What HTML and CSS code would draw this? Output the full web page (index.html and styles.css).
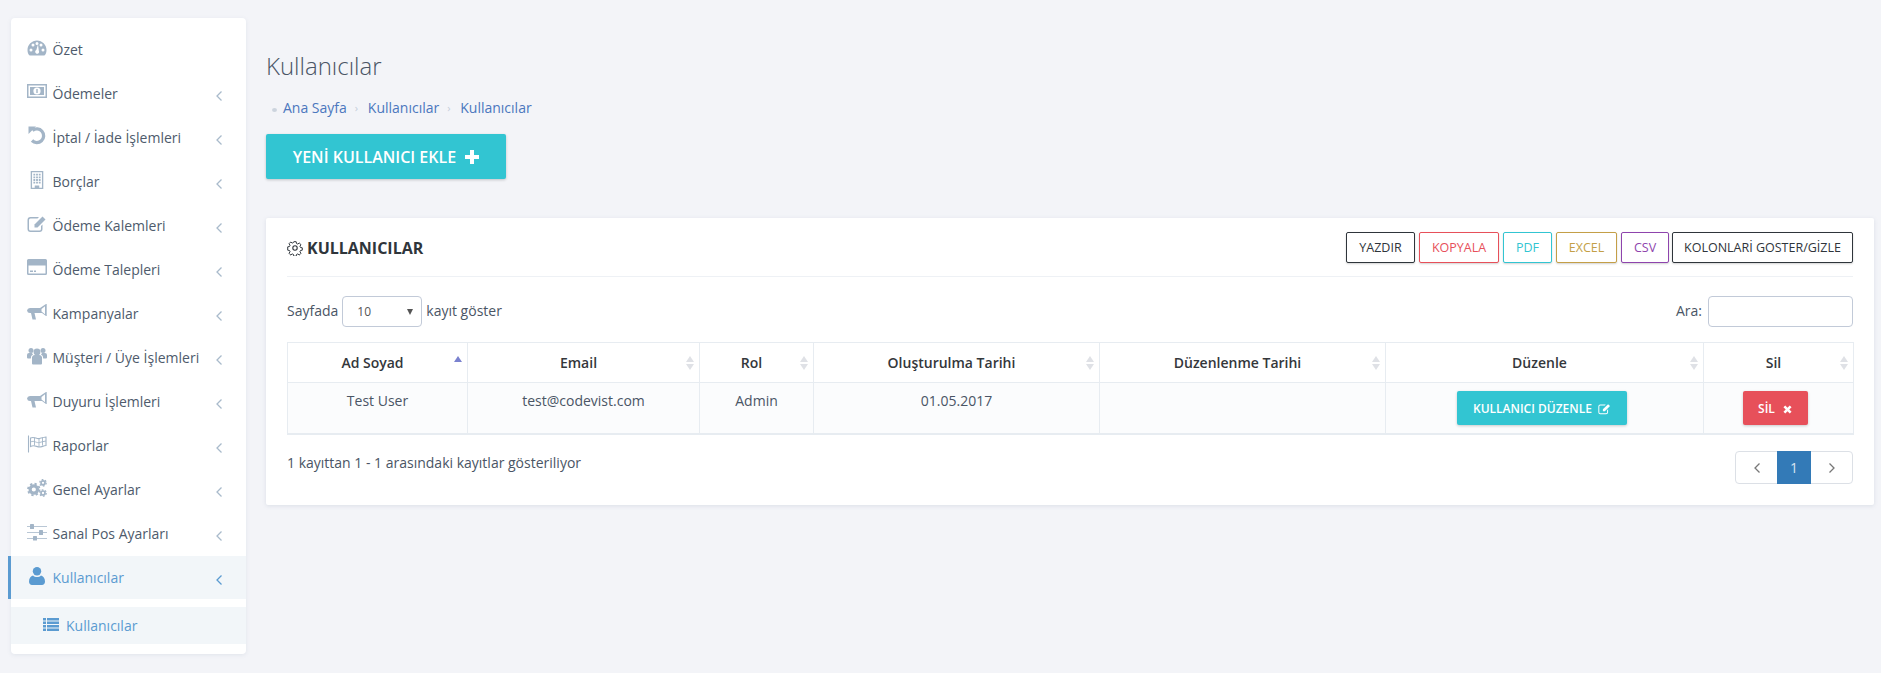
FILE: index.html
```html
<!DOCTYPE html>
<html lang="tr">
<head>
<meta charset="utf-8">
<title>Kullanıcılar</title>
<link rel="stylesheet" href="styles.css">
</head>
<body>
<svg class="defs" width="0" height="0">
  <symbol id="i-dash" viewBox="0 0 20 20"><path fill="currentColor" fill-rule="evenodd" d="M10 2.500C4.800 2.500 .5 6.800.5 12c0 1.900.5 3.600 1.500 5.100.2.300.5.400.8.400h14.400c.3 0 .6-.1.800-.4 1-1.500 1.500-3.200 1.500-5.100 0-5.200-4.300-9.500-9.500-9.500zM4 13.500a1.500 1.500 0 1 1 0-3 1.500 1.500 0 0 1 0 3zm2-5a1.500 1.500 0 1 1 0-3 1.500 1.500 0 0 1 0 3zm4-1.500a1.500 1.500 0 1 1 0-3 1.500 1.500 0 0 1 0 3zm1.200 8.500a2 2 0 0 1-3-1.700c0-.8.500-1.500 1.100-1.800L11 6.500l.8 6.200c.6.800.3 2.200-.6 2.800zM14 8.500a1.500 1.500 0 1 1 0-3 1.500 1.500 0 0 1 0 3zm2 5a1.500 1.500 0 1 1 0-3 1.500 1.500 0 0 1 0 3z"/></symbol>
  <symbol id="i-money" viewBox="0 0 20 14"><path fill="currentColor" fill-rule="evenodd" d="M0 0h20v14H0zM1.500 1.500v11h17v-11zM3 3h14v8H3z"/><circle cx="10" cy="7" r="3.600" fill="#fff"/><rect x="9.300" y="5" width="1.400" height="4" fill="currentColor"/></symbol>
  <symbol id="i-undo" viewBox="0 0 20 20"><path fill="none" stroke="currentColor" stroke-width="3.300" d="M5.500 5.500A6.800 6.800 0 1 1 5 15.500"/><path fill="currentColor" d="M1.500 1.500h7.500L1.500 9z"/></symbol>
  <symbol id="i-building" viewBox="0 0 16 20"><path fill="currentColor" fill-rule="evenodd" d="M1 0h14v20H1zM2.500 1.500v17h3V16h5v2.500h3v-17z"/><path fill="currentColor" d="M4 3h2v2H4zm3 0h2v2H7zm3 0h2v2h-2zM4 6h2v2H4zm3 0h2v2H7zm3 0h2v2h-2zM4 9h2v2H4zm3 0h2v2H7zm3 0h2v2h-2zM4 12h2v2H4zm3 0h2v2H7zm3 0h2v2h-2z"/></symbol>
  <symbol id="i-edit" viewBox="0 0 20 18"><path fill="currentColor" d="M3.500 2H12l-1.500 1.500h-7A1.500 1.500 0 0 0 2 5v9a1.500 1.500 0 0 0 1.500 1.500h9A1.500 1.500 0 0 0 14 14v-3l1.500-1.500V14a3 3 0 0 1-3 3h-9a3 3 0 0 1-3-3V5a3 3 0 0 1 3-3z"/><path fill="currentColor" d="M15.500 1.500l3 3-8 8H7.500v-3z"/></symbol>
  <symbol id="i-card" viewBox="0 0 20 16"><path fill="currentColor" fill-rule="evenodd" d="M1.500 0h17A1.500 1.500 0 0 1 20 1.500v13a1.500 1.500 0 0 1-1.500 1.500h-17A1.500 1.500 0 0 1 0 14.500v-13A1.500 1.500 0 0 1 1.500 0zM1.500 6.500v8h17v-8zM3 11.500h3V13H3zm4 0h2V13H7z"/></symbol>
  <symbol id="i-bull" viewBox="0 0 20 16"><path fill="currentColor" fill-rule="evenodd" d="M19 0h.700v12H19l-4-3H7.500L9 15.500H5.500L4 9H3a3 3 0 0 1-3-2.500A3 3 0 0 1 3 4h10zM18 2.200l-3.500 2.800v2.500l3.500 2.800z"/></symbol>
  <symbol id="i-users" viewBox="0 0 20 18"><g fill="currentColor"><circle cx="10" cy="5" r="3.400"/><circle cx="4" cy="3.500" r="2.500"/><circle cx="16" cy="3.500" r="2.500"/><path d="M5 10a3 3 0 0 1 3-2h4a3 3 0 0 1 3 2v6.500a1 1 0 0 1-1 1H6a1 1 0 0 1-1-1z"/><path d="M0 8a2 2 0 0 1 2-2h3a4 4 0 0 0 1 1.500A4 4 0 0 0 3.800 11.500H1a1 1 0 0 1-1-1zM20 8a2 2 0 0 0-2-2h-3a4 4 0 0 1-1 1.500 4 4 0 0 1 2.200 4H19a1 1 0 0 0 1-1z"/></g></symbol>
  <symbol id="i-flag" viewBox="0 0 20 17"><g fill="none" stroke="currentColor"><path stroke-width="1.100" d="M1.500 0v17"/><path stroke-width="1.100" d="M3.500 2.500c4-2 6 1.500 9 .5 2-.5 4-1.200 6.500-1.500v8.500c-3 .5-4.500 1.500-6.500 1.500-3 0-5-2.500-9-.5z"/><path stroke-width=".9" d="M7.500 2v8M12 3v8.500M15.500 2v8M3.500 6.500c4-2 6 1.500 9 .5 2-.5 4-1.200 6.500-1.500"/></g></symbol>
  <symbol id="i-cogs" viewBox="0 0 20 18"><g fill="none" stroke="currentColor"><circle cx="6.800" cy="10.500" r="3.700" stroke-width="3.200"/><circle cx="6.800" cy="10.500" r="5.800" stroke-width="1.800" stroke-dasharray="2.280 2.280"/><circle cx="16" cy="3.800" r="2" stroke-width="1.700"/><circle cx="16" cy="3.800" r="3.200" stroke-width="1.300" stroke-dasharray="1.675 1.675"/><circle cx="16" cy="14" r="2" stroke-width="1.700"/><circle cx="16" cy="14" r="3.200" stroke-width="1.300" stroke-dasharray="1.675 1.675"/></g></symbol>
  <symbol id="i-sliders" viewBox="0 0 20 16"><g fill="currentColor"><path d="M0 2.200h20v.9H0zm0 6h20v.9H0zm0 6h20v.9H0z"/><rect x="3" y="0" width="4" height="5" rx=".6"/><rect x="12" y="6" width="4" height="5" rx=".6"/><rect x="6" y="12" width="4" height="4.500" rx=".6"/></g></symbol>
  <symbol id="i-user" viewBox="0 0 16 18"><g fill="currentColor"><circle cx="8" cy="4.300" r="4.200"/><path d="M0 14.500C0 11 1.800 8.800 4 8.400c1 1 2.400 1.600 4 1.600s3-.6 4-1.600c2.200.4 4 2.600 4 6.100 0 2-1.300 3.500-3 3.500H3c-1.700 0-3-1.500-3-3.500z"/></g></symbol>
  <symbol id="i-list" viewBox="0 0 16 13"><path fill="currentColor" d="M0 0h3v2.400H0zm4 0h12v2.400H4zM0 3.500h3v2.400H0zm4 0h12v2.400H4zM0 7h3v2.400H0zm4 0h12v2.400H4zM0 10.500h3v2.400H0zm4 0h12v2.400H4z"/></symbol>
  <symbol id="i-left" viewBox="0 0 8 12"><path fill="none" stroke="currentColor" stroke-width="1.300" d="M6.500 1.500L2 6l4.500 4.500"/></symbol>
  <symbol id="i-right" viewBox="0 0 8 12"><path fill="none" stroke="currentColor" stroke-width="1.300" d="M1.500 1.500L6 6l-4.500 4.500"/></symbol>
  <symbol id="i-gear" viewBox="0 0 16 16"><g fill="none" stroke="currentColor" stroke-width="1.100" stroke-linejoin="round"><circle cx="8" cy="8" r="2.200"/><path d="M6.700 1h2.600l.4 2 1.300.6 1.800-1.100 1.800 1.800-1.100 1.800.6 1.300 2 .4v2.600l-2 .4-.6 1.300 1.100 1.800-1.800 1.800-1.800-1.100-1.300.6-.4 2H6.700l-.4-2-1.300-.6-1.800 1.100-1.800-1.800 1.100-1.800-.6-1.300-2-.4V6.700l2-.4.6-1.300-1.100-1.800 1.800-1.800 1.800 1.100 1.300-.6z" transform="translate(.8 .8) scale(.9)"/></g></symbol>
  <symbol id="i-plus" viewBox="0 0 14 14"><path fill="currentColor" d="M5 0h4v5h5v4H9v5H5V9H0V5h5z"/></symbol>
  <symbol id="i-times" viewBox="0 0 10 10"><path fill="currentColor" d="M2.500.5L5 3l2.500-2.500 2 2L7 5l2.500 2.500-2 2L5 7 2.500 9.500l-2-2L3 5 .5 2.500z"/></symbol>
</svg>

<div class="page">
  <aside class="sidebar">
    <ul class="menu">
      <li class="item"><svg class="ic ic-dash"><use href="#i-dash"/></svg><span class="label">Özet</span></li>
      <li class="item"><svg class="ic ic-money"><use href="#i-money"/></svg><span class="label">Ödemeler</span><svg class="arrow"><use href="#i-left"/></svg></li>
      <li class="item"><svg class="ic ic-undo"><use href="#i-undo"/></svg><span class="label">İptal / İade İşlemleri</span><svg class="arrow"><use href="#i-left"/></svg></li>
      <li class="item"><svg class="ic ic-building"><use href="#i-building"/></svg><span class="label">Borçlar</span><svg class="arrow"><use href="#i-left"/></svg></li>
      <li class="item"><svg class="ic ic-edit"><use href="#i-edit"/></svg><span class="label">Ödeme Kalemleri</span><svg class="arrow"><use href="#i-left"/></svg></li>
      <li class="item"><svg class="ic ic-card"><use href="#i-card"/></svg><span class="label">Ödeme Talepleri</span><svg class="arrow"><use href="#i-left"/></svg></li>
      <li class="item"><svg class="ic ic-bull"><use href="#i-bull"/></svg><span class="label">Kampanyalar</span><svg class="arrow"><use href="#i-left"/></svg></li>
      <li class="item"><svg class="ic ic-users"><use href="#i-users"/></svg><span class="label">Müşteri / Üye İşlemleri</span><svg class="arrow"><use href="#i-left"/></svg></li>
      <li class="item"><svg class="ic ic-bull"><use href="#i-bull"/></svg><span class="label">Duyuru İşlemleri</span><svg class="arrow"><use href="#i-left"/></svg></li>
      <li class="item"><svg class="ic ic-flag"><use href="#i-flag"/></svg><span class="label">Raporlar</span><svg class="arrow"><use href="#i-left"/></svg></li>
      <li class="item"><svg class="ic ic-cogs"><use href="#i-cogs"/></svg><span class="label">Genel Ayarlar</span><svg class="arrow"><use href="#i-left"/></svg></li>
      <li class="item"><svg class="ic ic-sliders"><use href="#i-sliders"/></svg><span class="label">Sanal Pos Ayarları</span><svg class="arrow"><use href="#i-left"/></svg></li>
      <li class="item active"><svg class="ic ic-user"><use href="#i-user"/></svg><span class="label">Kullanıcılar</span><svg class="arrow"><use href="#i-left"/></svg></li>
      <li class="subitem"><svg class="ic-list"><use href="#i-list"/></svg><span class="label">Kullanıcılar</span></li>
    </ul>
  </aside>

  <main class="content">
    <h1 class="title">Kullanıcılar</h1>
    <ul class="crumbs">
      <li><a href="#">Ana Sayfa</a></li>
      <li><a href="#">Kullanıcılar</a></li>
      <li><a href="#">Kullanıcılar</a></li>
    </ul>
    <button class="add-btn" type="button">YENİ KULLANICI EKLE <svg class="plus"><use href="#i-plus"/></svg></button>

    <section class="card">
      <header class="card-head">
        <h2 class="card-title"><svg class="gear"><use href="#i-gear"/></svg>KULLANICILAR</h2>
        <div class="tools">
          <button class="tool tool-dark" type="button">YAZDIR</button>
          <button class="tool tool-red" type="button">KOPYALA</button>
          <button class="tool tool-cyan" type="button">PDF</button>
          <button class="tool tool-gold" type="button">EXCEL</button>
          <button class="tool tool-purple" type="button">CSV</button>
          <button class="tool tool-dark tool-cols" type="button">KOLONLARİ GOSTER/GİZLE</button>
        </div>
      </header>

      <div class="filters">
        <label class="length">Sayfada <span class="select">10<span class="caret"></span></span> kayıt göster</label>
        <label class="search">Ara: <span class="search-box"></span></label>
      </div>

      <table class="grid">
        <colgroup>
          <col class="c1"><col class="c2"><col class="c3"><col class="c4"><col class="c5"><col class="c6"><col class="c7">
        </colgroup>
        <thead>
          <tr>
            <th class="sort-asc">Ad Soyad</th>
            <th>Email</th>
            <th>Rol</th>
            <th>Oluşturulma Tarihi</th>
            <th>Düzenlenme Tarihi</th>
            <th>Düzenle</th>
            <th>Sil</th>
          </tr>
        </thead>
        <tbody>
          <tr>
            <td>Test User</td>
            <td>test@codevist.com</td>
            <td>Admin</td>
            <td>01.05.2017</td>
            <td></td>
            <td><button class="act act-cyan" type="button">KULLANICI DÜZENLE <svg class="act-ic"><use href="#i-edit"/></svg></button></td>
            <td><button class="act act-red" type="button">SİL <svg class="act-x"><use href="#i-times"/></svg></button></td>
          </tr>
        </tbody>
      </table>

      <div class="foot">
        <div class="info">1 kayıttan 1 - 1 arasındaki kayıtlar gösteriliyor</div>
        <div class="pager">
          <span class="pg pg-nav"><svg class="pg-ic"><use href="#i-left"/></svg></span>
          <span class="pg pg-on">1</span>
          <span class="pg pg-nav"><svg class="pg-ic"><use href="#i-right"/></svg></span>
        </div>
      </div>
    </section>
  </main>
</div>
</body>
</html>
```
FILE: styles.css
```css
* { box-sizing: border-box; }
html, body { margin: 0; height: 673px; overflow: hidden; }
body {
  background: #f3f4f8;
  font-family: "Open Sans", sans-serif;
  font-size: 14px;
  color: #4a5565;
}
.defs { position: absolute; }
.page { display: flex; align-items: flex-start; padding: 18px 7px 0 11px; }

/* sidebar */
.sidebar {
  width: 235px;
  flex: none;
  background: #fff;
  border-radius: 4px;
  padding: 10px 0;
  box-shadow: 0 1px 4px rgba(97, 121, 150, .12);
}
.menu { list-style: none; margin: 0; padding: 0; }
.item {
  display: flex;
  align-items: center;
  height: 43px;
  margin-bottom: 1px;
  position: relative;
  padding-left: 16px;
  color: #4e5b6c;
}
.ic { width: 20px; height: 18px; flex: none; color: #a3b5c7; margin-top: -3px; }
.label { margin-left: 5.500px; white-space: nowrap; }
.arrow { width: 8px; height: 12px; position: absolute; left: 204px; top: 18px; color: #a9bacb; }
.ic-dash { height: 20px; }
.ic-undo { height: 20px; margin-top: -5px; }
.ic-money { height: 14px; margin-top: -6px; }
.ic-card { height: 16px; margin-top: -5px; }
.ic-bull { height: 16px; }
.ic-user { color: #5b9bd1; height: 18px; }
.active { background: #f2f6f9; color: #5b9bd1; margin: 0 0 8px -3px; border-left: 3px solid #5b9bd1; width: 238px; }
.active .arrow { color: #5b9bd1; }
.subitem {
  display: flex;
  align-items: center;
  height: 37px;
  padding-left: 32px;
  background: #f2f6f9;
  color: #5b9bd1;
}
.ic-list { width: 16px; height: 13px; color: #5b9bd1; margin-top: -3px; }
.subitem .label { margin-left: 7px; }

/* content */
.content { flex: 1; min-width: 0; margin-left: 20px; }
.title { margin: 0; padding-top: 34px; font-size: 24px; font-weight: 300; line-height: 28px; color: #4a5565; }
.crumbs { list-style: none; margin: 18px 0 0; padding: 0 0 0 17px; display: flex; line-height: 20px; position: relative; }
.crumbs::before { content: ""; position: absolute; left: 6px; top: 10px; width: 5px; height: 4px; border-radius: 50%; background: #ccd4de; }
.crumbs a { color: #4b77be; text-decoration: none; }
.crumbs li + li { margin-left: 21px; position: relative; }
.crumbs li + li::before { content: "›"; position: absolute; left: -13px; top: 0; color: #c5cdd8; font-size: 11px; }
.add-btn {
  display: block;
  margin-top: 16px;
  width: 240px;
  height: 45px;
  border: 0;
  border-radius: 2px;
  background: #32c5d2;
  color: #fff;
  font: 600 16px "Open Sans", sans-serif;
  box-shadow: 0 1px 3px rgba(0, 0, 0, .2);
  padding: 0;
}
.plus { width: 14px; height: 14px; vertical-align: -1px; margin-left: 5px; }

/* card */
.card {
  margin-top: 39px;
  background: #fff;
  padding: 14px 21px 0;
  height: 287px;
  border-radius: 2px;
  box-shadow: 0 1px 4px rgba(97, 121, 150, .16);
}
.card-head { display: flex; justify-content: space-between; align-items: flex-start; height: 45px; border-bottom: 1px solid #eef1f5; }
.card-title { margin: 0; padding-top: 4px; display: flex; align-items: center; font-size: 16px; font-weight: 700; line-height: 24px; color: #2f353b; }
.gear { width: 16px; height: 16px; margin-right: 4px; color: #2f353b; }
.tools { display: flex; gap: 3px; }
.tool {
  height: 31px;
  padding: 0;
  background: #fff;
  border: 1px solid;
  border-radius: 2px;
  font: 400 12.500px "Open Sans", sans-serif;
  box-shadow: 0 1px 2px rgba(0, 0, 0, .18);
}
.tool-dark { width: 69px; border-color: #2f353b; color: #2f353b; }
.tool-red { width: 80px; border-color: #e7505a; color: #e7505a; margin-left: 1px; }
.tool-cyan { width: 49px; border-color: #32c5d2; color: #32c5d2; margin-left: 1px; }
.tool-gold { width: 61px; border-color: #c49f47; color: #c49f47; margin-left: 1px; }
.tool-purple { width: 48px; border-color: #8e44ad; color: #8e44ad; margin-left: 1px; }
.tool-cols { width: 181px; }
.filters { display: flex; justify-content: space-between; align-items: center; margin-top: 19px; height: 31px; color: #4a5565; }
.length, .search { display: flex; align-items: center; gap: 4px; height: 31px; padding-bottom: 2px; }
.search { gap: 6px; }
.select { width: 80px; height: 31px; margin-bottom: -2px; border: 1px solid #c2cad8; border-radius: 4px; display: flex; align-items: center; padding-left: 14px; font-size: 12px; color: #555; position: relative; }
.caret { position: absolute; right: 8px; top: 12px; border: 3px solid transparent; border-top: 6px solid #555; border-bottom: 0; }
.search-box { width: 145px; height: 31px; margin-bottom: -2px; border: 1px solid #c2cad8; border-radius: 4px; }

/* table */
.grid { width: 1566px; table-layout: fixed; border-collapse: collapse; margin-top: 15px; border-bottom: 2px solid #e7ecf1; }
.c1 { width: 180px; } .c2 { width: 232px; } .c3 { width: 114px; } .c4 { width: 286px; }
.c5 { width: 286px; } .c6 { width: 318px; } .c7 { width: 150px; }
.grid th, .grid td { border: 1px solid #e7ecf1; text-align: center; }
.grid th {
  height: 40px;
  padding: 0 18px 0 8px;
  font-weight: 600;
  color: #34373b;
  position: relative;
}
.grid th::before, .grid th::after {
  content: "";
  position: absolute;
  right: 5px;
  border-left: 4px solid transparent;
  border-right: 4px solid transparent;
}
.grid th::before { top: 13px; border-bottom: 6px solid #dfe1e6; }
.grid th::after { top: 21px; border-top: 6px solid #dfe1e6; }
.grid th.sort-asc::before { border-bottom-color: #7a82cf; }
.grid th.sort-asc::after { display: none; }
.grid td { height: 51px; padding: 8px 10px; vertical-align: top; background: #fbfcfd; color: #4a5565; line-height: 20px; }
.act {
  height: 34px;
  margin: 0 5px 0 0;
  border: 0;
  border-radius: 2px;
  color: #fff;
  font: 600 12px "Open Sans", sans-serif;
  box-shadow: 0 1px 3px rgba(0, 0, 0, .2);
  vertical-align: top;
  display: inline-block;
  padding: 0;
}
.act-cyan { width: 170px; background: #32c5d2; }
.act-red { width: 65px; margin-right: 7px; background: #e7505a; }
.act-ic { width: 13px; height: 12px; vertical-align: -2px; margin-left: 3px; }
.act-x { width: 9px; height: 9px; vertical-align: -1px; margin-left: 5px; }

/* footer */
.foot { display: flex; justify-content: space-between; align-items: flex-start; margin-top: 16px; }
.info { line-height: 24px; color: #4a5565; }
.pager { display: flex; height: 33px; border: 1px solid #dce0e6; border-radius: 4px; }
.pg { display: flex; align-items: center; justify-content: center; width: 34px; }
.pg-nav { width: 41px; color: #777; }
.pg-on { background: #337ab7; color: #d9e4ef; margin: -1px 0; height: 33px; }
.pg-ic { width: 8px; height: 12px; }
```
